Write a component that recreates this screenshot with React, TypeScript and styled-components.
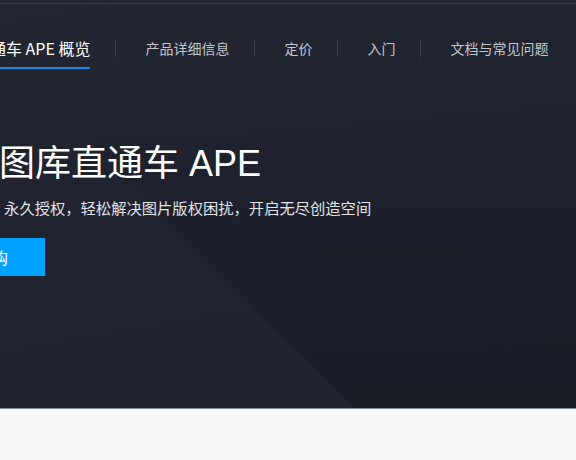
import React from 'react';
import styled, { createGlobalStyle } from 'styled-components';

const GlobalStyle = createGlobalStyle`
    html, body {
        margin: 0;
        padding: 0;
        background: #f6f7f9;
        overflow: hidden;
    }
    * {
        box-sizing: border-box;
    }
    body {
        font-family: "Liberation Sans", "Noto Sans CJK SC", sans-serif;
    }
`;

const Page = styled.div`
    width: 576px;
    height: 460px;
    display: flex;
    flex-direction: column;
    overflow: hidden;
    background: #f6f7f9;
`;

const Hero = styled.section`
    position: relative;
    height: 409px;
    flex-shrink: 0;
    padding-top: 3px;
    background: linear-gradient(170deg, #22262f 0%, #1f2330 45%, #1e222d 100%);
    border-bottom: 1px solid #7f8796;
    overflow: hidden;

    &::before {
        content: "";
        position: absolute;
        inset: 0;
        background: linear-gradient(180deg, rgba(22, 25, 33, 0) 15%, rgba(22, 25, 33, 0.55) 100%);
        clip-path: polygon(-53px 0, 576px 0, 576px 408px, 355px 408px);
        pointer-events: none;
    }
`;

const Nav = styled.nav`
    position: relative;
    height: 66px;
    border-top: 1px solid #383c46;
    display: flex;
    align-items: flex-end;
    margin-left: ${props => props.offset}px;
`;

const Tab = styled.a`
    display: block;
    line-height: 24px;
    padding-bottom: 7px;
    border-bottom: 2px solid ${props => props.active ? '#0b8cf0' : 'transparent'};
    font-family: "Noto Sans CJK SC", sans-serif;
    font-size: ${props => props.active ? '16px' : '14px'};
    color: ${props => props.active ? '#ffffff' : '#c3c7ce'};
    white-space: nowrap;
    text-decoration: none;
    cursor: pointer;
`;

const Divider = styled.span`
    width: 1px;
    height: 17px;
    align-self: flex-end;
    margin: 0 29px 12px 25px;
    background: #3a3f4a;
`;

const Content = styled.div`
    position: relative;
    display: flex;
    flex-direction: column;
    align-items: flex-start;
    padding-top: 71px;
    margin-left: ${props => props.offset}px;
`;

const Title = styled.h1`
    margin: 0;
    font-size: 36px;
    line-height: 48px;
    font-weight: 400;
    color: #ffffff;
    white-space: nowrap;
`;

const Subtitle = styled.p`
    margin: 9px 0 0 6px;
    font-size: 15.3px;
    line-height: 24px;
    color: #e2e4e8;
    white-space: nowrap;
`;

const BuyButton = styled.button`
    margin-top: 17px;
    height: 38px;
    padding: 0 37px;
    border: none;
    border-radius: 0;
    background: #00a1ff;
    color: #ffffff;
    font-family: inherit;
    font-size: 16px;
    cursor: pointer;
    white-space: nowrap;
`;

const Below = styled.div`
    flex: 1;
    background: #f6f7f9;
`;

const tabs = ['产品详细信息', '定价', '入门', '文档与常见问题'];

export default function App() {
    return (
        <>
            <GlobalStyle />
            <Page>
                <Hero>
                    <Nav offset={-106}>
                        <Tab active>阿里云图库直通车 APE 概览</Tab>
                        {tabs.map(t => (
                            <React.Fragment key={t}>
                                <Divider />
                                <Tab>{t}</Tab>
                            </React.Fragment>
                        ))}
                    </Nav>
                    <Content offset={-109}>
                        <Title>阿里云图库直通车 APE</Title>
                        <Subtitle>海量正版素材，永久授权，轻松解决图片版权困扰，开启无尽创造空间</Subtitle>
                        <BuyButton>立即去选购</BuyButton>
                    </Content>
                </Hero>
                <Below />
            </Page>
        </>
    );
}
